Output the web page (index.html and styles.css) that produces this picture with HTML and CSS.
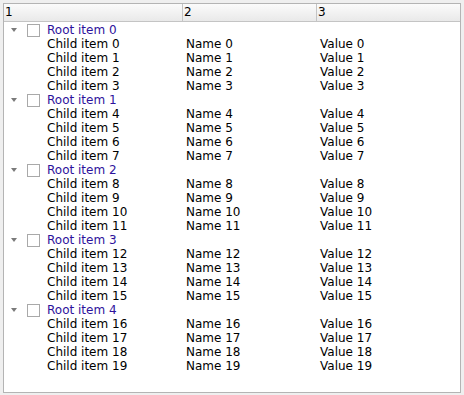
FILE: index.html
```html
<!DOCTYPE html>
<html lang="en">
<head>
  <meta charset="UTF-8" />
  <title>Tree</title>
  <link rel="stylesheet" href="styles.css">
</head>
<body>
  <div class="tree">
    <div class="header">
      <div class="hcell">1</div>
      <div class="hcell">2</div>
      <div class="hcell">3</div>
    </div>

    <div class="row root">
      <div class="cell first"><span class="arrow"></span><span class="check"></span>Root item 0</div>
      <div class="cell"></div><div class="cell"></div>
    </div>
    <div class="row"><div class="cell first">Child item 0</div><div class="cell">Name 0</div><div class="cell">Value 0</div></div>
    <div class="row"><div class="cell first">Child item 1</div><div class="cell">Name 1</div><div class="cell">Value 1</div></div>
    <div class="row"><div class="cell first">Child item 2</div><div class="cell">Name 2</div><div class="cell">Value 2</div></div>
    <div class="row"><div class="cell first">Child item 3</div><div class="cell">Name 3</div><div class="cell">Value 3</div></div>

    <div class="row root">
      <div class="cell first"><span class="arrow"></span><span class="check"></span>Root item 1</div>
      <div class="cell"></div><div class="cell"></div>
    </div>
    <div class="row"><div class="cell first">Child item 4</div><div class="cell">Name 4</div><div class="cell">Value 4</div></div>
    <div class="row"><div class="cell first">Child item 5</div><div class="cell">Name 5</div><div class="cell">Value 5</div></div>
    <div class="row"><div class="cell first">Child item 6</div><div class="cell">Name 6</div><div class="cell">Value 6</div></div>
    <div class="row"><div class="cell first">Child item 7</div><div class="cell">Name 7</div><div class="cell">Value 7</div></div>

    <div class="row root">
      <div class="cell first"><span class="arrow"></span><span class="check"></span>Root item 2</div>
      <div class="cell"></div><div class="cell"></div>
    </div>
    <div class="row"><div class="cell first">Child item 8</div><div class="cell">Name 8</div><div class="cell">Value 8</div></div>
    <div class="row"><div class="cell first">Child item 9</div><div class="cell">Name 9</div><div class="cell">Value 9</div></div>
    <div class="row"><div class="cell first">Child item 10</div><div class="cell">Name 10</div><div class="cell">Value 10</div></div>
    <div class="row"><div class="cell first">Child item 11</div><div class="cell">Name 11</div><div class="cell">Value 11</div></div>

    <div class="row root">
      <div class="cell first"><span class="arrow"></span><span class="check"></span>Root item 3</div>
      <div class="cell"></div><div class="cell"></div>
    </div>
    <div class="row"><div class="cell first">Child item 12</div><div class="cell">Name 12</div><div class="cell">Value 12</div></div>
    <div class="row"><div class="cell first">Child item 13</div><div class="cell">Name 13</div><div class="cell">Value 13</div></div>
    <div class="row"><div class="cell first">Child item 14</div><div class="cell">Name 14</div><div class="cell">Value 14</div></div>
    <div class="row"><div class="cell first">Child item 15</div><div class="cell">Name 15</div><div class="cell">Value 15</div></div>

    <div class="row root">
      <div class="cell first"><span class="arrow"></span><span class="check"></span>Root item 4</div>
      <div class="cell"></div><div class="cell"></div>
    </div>
    <div class="row"><div class="cell first">Child item 16</div><div class="cell">Name 16</div><div class="cell">Value 16</div></div>
    <div class="row"><div class="cell first">Child item 17</div><div class="cell">Name 17</div><div class="cell">Value 17</div></div>
    <div class="row"><div class="cell first">Child item 18</div><div class="cell">Name 18</div><div class="cell">Value 18</div></div>
    <div class="row"><div class="cell first">Child item 19</div><div class="cell">Name 19</div><div class="cell">Value 19</div></div>
  </div>
</body>
</html>
```

FILE: styles.css
```css
* {
  box-sizing: border-box;
}
body {
  margin: 0;
  padding: 3px;
  background: #efefef;
  font-family: 'DejaVu Sans', sans-serif;
  font-size: 12px;
  color: #000;
}

.tree {
  width: 458px;
  height: 390px;
  background: #fff;
  border: 1px solid #b4b4b4;
  overflow: hidden;
}

.header,
.row {
  display: grid;
  grid-template-columns: 179px 134px 1fr;
}

.header {
  height: 18px;
  margin-bottom: 1px;
  background: linear-gradient(to bottom, #fbfbfb, #e9e9e9);
  border-bottom: 1px solid #c4c4c4;
}

.hcell {
  line-height: 17px;
  padding-left: 1px;
  border-right: 1px solid #c4c4c4;
}
.hcell:last-child {
  border-right: none;
}

.row {
  height: 14px;
  line-height: 14px;
}

.cell {
  padding-left: 3px;
  white-space: nowrap;
}

.cell.first {
  display: flex;
  align-items: center;
  padding-left: 43px;
}

.root .cell.first {
  padding-left: 7px;
  color: #2e129c;
}

.arrow {
  width: 0;
  height: 0;
  border-left: 3.5px solid transparent;
  border-right: 3.5px solid transparent;
  border-top: 4px solid #7a7a7a;
  margin-right: 10px;
}

.check {
  width: 13px;
  height: 13px;
  border: 1px solid #a9a9a9;
  background: #fff;
  margin-right: 7px;
}
```
